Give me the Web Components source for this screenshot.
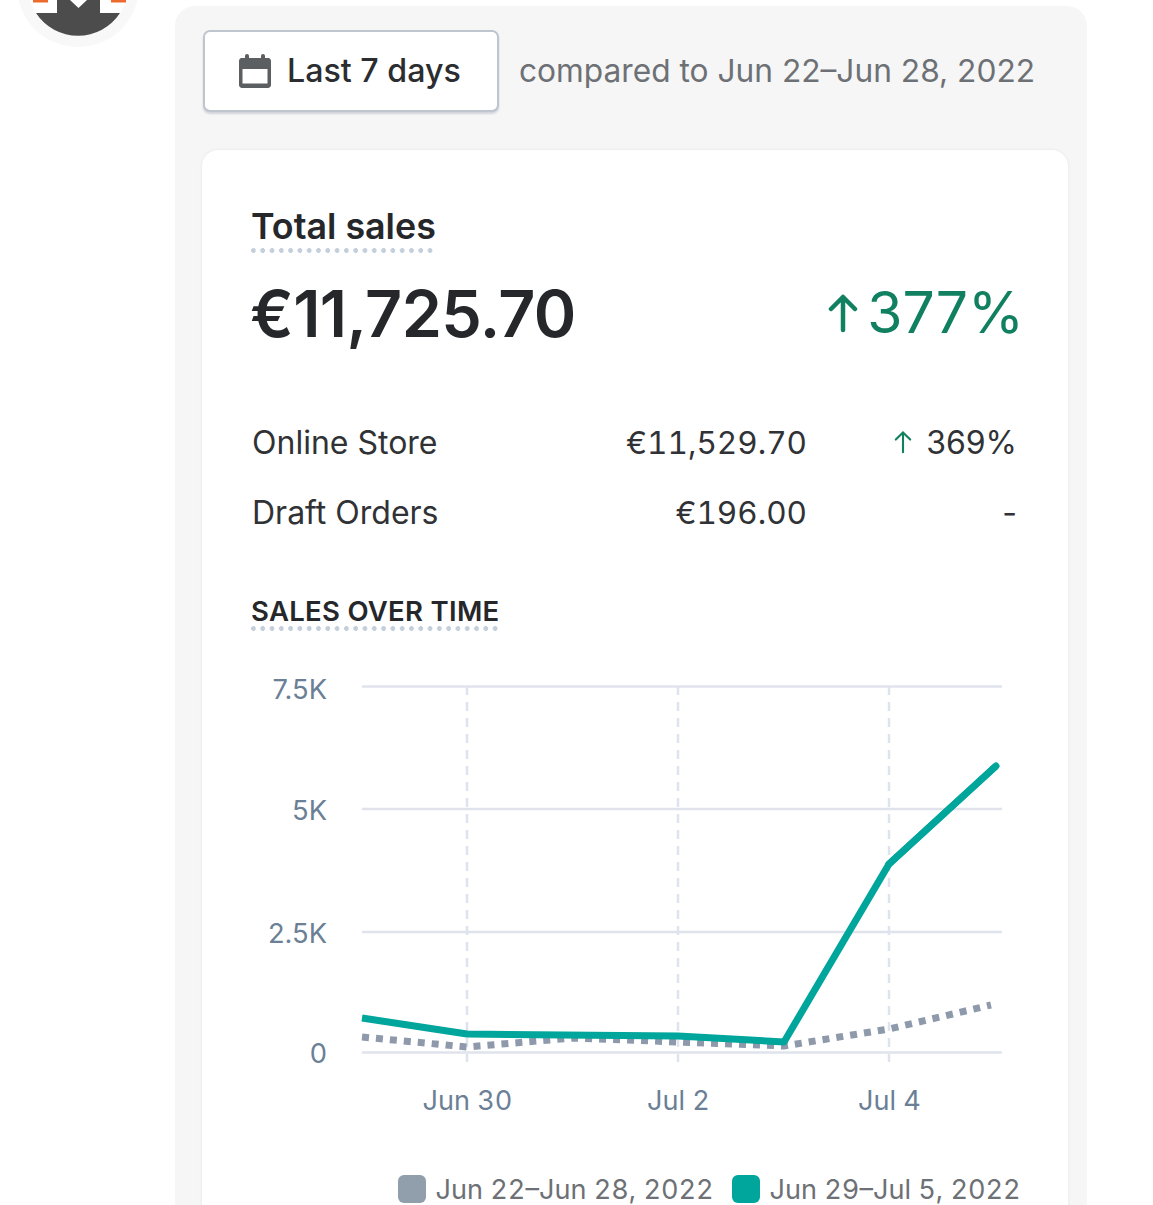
<!doctype html>
<html><head><meta charset="utf-8">
<style>html,body{margin:0;background:#fff;height:1205px;overflow:hidden}body{font-family:Inter,"Liberation Sans",sans-serif}</style>
</head><body>
<report-page>
<shop-avatar slot="avatar"></shop-avatar>
<date-row slot="top" label="Last 7 days">compared to Jun 22–Jun 28, 2022</date-row>
<sales-card slot="card"></sales-card>
</report-page>
<script>
function def(name, html){customElements.define(name,class extends HTMLElement{constructor(){super();this.attachShadow({mode:'open'}).innerHTML=typeof html==='function'?html(this):html;}});}
def('report-page',`<style>:host{display:flex;align-items:flex-start;height:1205px;overflow:hidden}
.side{width:175px;flex:none}
.panel{width:912px;flex:none;margin-top:6px;height:1260px;background:#f6f6f7;border-radius:20px;box-sizing:border-box;padding:23.500px 19px 0 27px}
</style><div class="side"><slot name="avatar"></slot></div><div class="panel"><slot name="top"></slot><slot name="card"></slot></div>`);
def('shop-avatar',`<style>:host{display:block;width:175px;height:50px}svg{display:block}</style>
<svg width="175" height="50" viewBox="0 0 175 50"><circle cx="78" cy="-14" r="61" fill="#f8f8f8"/><circle cx="78" cy="-14" r="50" fill="#fff"/>
<path d="M36 13H57V0H100V13H120A50 50 0 0 1 36 13Z" fill="#4c4c4c"/>
<path d="M70 0 78.500 8 87 0Z" fill="#fff"/>
<path d="M33 0H48V2.500H33ZM111 0H126V2.500H111Z" fill="#ee6a2c"/></svg>`);
def('date-row',(h)=>`<style>:host{display:flex;align-items:center;gap:20px;height:82px;margin:0 0 38.500px .5px}
.btn{box-sizing:border-box;width:296.400px;height:82px;border:2px solid #bfc5ce;border-radius:7px;background:#fff;box-shadow:0 2px 2px rgba(100,110,130,.25);display:flex;align-items:center;gap:15px;padding-left:33.500px;font-size:32.200px;font-weight:500;color:#2b2d30}
.t{font-size:31.700px;color:#6d7175;white-space:nowrap}svg{flex:none}</style>
<div class="btn"><svg width="34" height="34" viewBox="0 0 34 34"><path fill-rule="evenodd" fill="#5c5f62" d="M9 0c1.200 0 2 .8 2 2v2h12V2c0-1.200.8-2 2-2s2 .8 2 2v2h3.500C32 4 33 5.500 33 7v24c0 1.600-1.400 3-3 3H4c-1.600 0-3-1.400-3-3V7c0-1.500 1-3 2.500-3H7V2c0-1.200.8-2 2-2zM4.500 15v14.500h25V15z"/></svg>${h.getAttribute('label')}</div><div class="t"><slot></slot></div>`);
def('stat-row',(h)=>`<style>:host{display:grid;grid-template-columns:1fr auto 209px;align-items:center;height:70px;font-size:32px;color:#303236;font-weight:400;padding:0 3px 0 1px}
.v{text-align:right;font-size:31.500px;font-variant-numeric:tabular-nums;margin-right:1px}.c{display:flex;justify-content:flex-end;align-items:center}</style>
<div><slot></slot></div><div class="v">${h.getAttribute('value')}</div><div class="c"><slot name="change"></slot></div>`);
def('up-arrow',(h)=>{const s=+h.getAttribute('size');const w=+h.getAttribute('stroke');return `<style>:host{display:inline-flex}</style><svg width="${s*0.75}" height="${s}" viewBox="0 0 30 40"><path d="M15 37V4M3 16 15 4 27 16" fill="none" stroke="#108060" stroke-width="${w}" stroke-linecap="round" stroke-linejoin="round"/></svg>`});
def('dotted-title',(h)=>`<style>:host{display:block;width:max-content;padding-bottom:6px;background:radial-gradient(circle at 2.500px 2.500px,#c4cfdc 2.200px,transparent 2.500px) 0 100%/9.300px 5px repeat-x}</style><slot></slot>`);
def('sales-chart',`<style>:host{display:block;margin:0 0 0 -49px;height:560px}svg{display:block;overflow:visible}text{font-family:Inter,"Liberation Sans",sans-serif;font-size:27.300px}.n text{font-variant-numeric:tabular-nums;font-size:27.100px}</style>
<svg width="866" height="560" viewBox="202 650 866 560">
<g stroke="#e0e3ec" stroke-width="2.500" fill="none">
<path d="M362 686.500H1002M362 809H1002M362 932H1002M362 1052.500H1002"/>
<path stroke="#dfe3ee" stroke-dasharray="9 7" d="M467 686V1062M678 686V1062M889 686V1062"/></g>
<g fill="#6b7f96" text-anchor="end"><text x="327" y="699">7.5K</text><text x="327" y="820">5K</text><text x="327" y="943">2.5K</text><text x="327" y="1063">0</text></g>
<g fill="#6b7f96" text-anchor="middle" class="n"><text x="467.500" y="1110">Jun 30</text><text x="678.500" y="1110">Jul 2</text><text x="889.500" y="1110">Jul 4</text></g>
<polyline points="362,1037 467,1047 573,1038 678,1042 784,1046 889,1029 991,1005" fill="none" stroke="#8e9aab" stroke-width="7" stroke-dasharray="7 7"/>
<polyline points="362,1018 467,1034 678,1036 784,1042 889,864 996,766" fill="none" stroke="#00a59c" stroke-width="7" stroke-linejoin="round"/>
<polyline points="889,864 996,766" fill="none" stroke="#00a59c" stroke-width="7" stroke-linecap="round"/>
<g class="n"><rect x="398" y="1175" width="28" height="28" rx="6" fill="#919eab"/><text x="435.500" y="1199" fill="#6d7175">Jun 22–Jun 28, 2022</text>
<rect x="732" y="1175" width="28" height="28" rx="6" fill="#00a59c"/><text x="769.500" y="1199" fill="#6d7175">Jun 29–Jul 5, 2022</text></g>
</svg>`);
def('sales-card',`<style>:host{display:block;box-sizing:border-box;width:866px;height:1200px;background:#fff;border-radius:16px;box-shadow:0 0 3px rgba(90,100,120,.12);padding:55px 48px 0 49px;color:#25272b}
.t{font-size:35.800px;font-weight:600;line-height:42px}
.m{display:flex;justify-content:space-between;align-items:center;height:100px;margin-top:11px;margin-bottom:43px}
.big{font-size:64.500px;font-weight:600;letter-spacing:-.6px;margin-left:-1px}
.pct{display:flex;align-items:center;gap:9px;font-size:57px;color:#108060;font-weight:400;margin:0 -4px 3px 0}
.s{font-size:27.500px;font-weight:600;line-height:32px;letter-spacing:.3px;padding-bottom:4px}
.h{margin:48px 0 19px}
</style>
<dotted-title class="t">Total sales</dotted-title>
<div class="m"><div class="big">€11,725.70</div><div class="pct"><up-arrow size="40" stroke="4.500"></up-arrow>377%</div></div>
<stat-row value="€11,529.70">Online Store<span slot="change" style="display:inline-flex;gap:14px;align-items:center"><up-arrow size="24" stroke="3.500"></up-arrow>369%</span></stat-row>
<stat-row value="€196.00">Draft Orders<span slot="change">-</span></stat-row>
<dotted-title class="s h">SALES OVER TIME</dotted-title>
<sales-chart></sales-chart>`);
</script>
</body></html>
